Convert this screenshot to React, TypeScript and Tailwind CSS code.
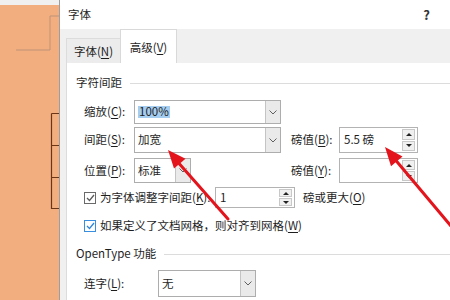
import React from 'react';

function Key({ children }: { children: React.ReactNode }) {
    return <span className="underline underline-offset-2 decoration-1">{children}</span>;
}

function Chevron() {
    return (
        <svg width="8" height="5" viewBox="0 0 8 5" className="text-[#606060]">
            <path d="M0.5 0.5 L4 4 L7.5 0.5" fill="none" stroke="currentColor" strokeWidth="1" />
        </svg>
    );
}

function Combo({ value, className, selected }: { value?: string; className: string; selected?: boolean }) {
    return (
        <div className={`flex h-full border border-[#adadad] bg-white ${className}`}>
            <div className="flex-1 flex items-center pl-[3px] overflow-hidden whitespace-nowrap">
                {selected ? <span className="bg-[#a5cdf0] px-[1px]">{value}</span> : value}
            </div>
            <div className="w-[15px] flex items-center justify-center bg-[#eaeaea] border-l border-[#c4c4c4]">
                <Chevron />
            </div>
        </div>
    );
}

function Spin({ value, className }: { value?: string; className: string }) {
    return (
        <div className={`flex h-full border border-[#b3b3b3] bg-white ${className}`}>
            <div className="flex-1 flex items-center pl-[4px]">{value}</div>
            <div className="w-[16px] flex flex-col gap-px p-px pr-[2px]">
                <div className="flex-1 flex items-center justify-center bg-[#f0f0f0] border border-[#c8c8c8]">
                    <svg width="6" height="3" viewBox="0 0 6 3"><path d="M0 3 L3 0 L6 3 Z" fill="#222" /></svg>
                </div>
                <div className="flex-1 flex items-center justify-center bg-[#f0f0f0] border border-[#c8c8c8]">
                    <svg width="6" height="3" viewBox="0 0 6 3"><path d="M0 0 L3 3 L6 0 Z" fill="#222" /></svg>
                </div>
            </div>
        </div>
    );
}

function Check({ blue }: { blue?: boolean }) {
    const c = blue ? '#2f86d8' : '#5a5a5a';
    return (
        <div className={`w-[12px] h-[12px] border bg-white flex items-center justify-center ${blue ? 'border-[#3a8ee0]' : 'border-[#6a6a6a]'}`}>
            <svg width="9" height="8" viewBox="0 0 9 8">
                <path d="M1 4 L3.5 6.5 L8 1" fill="none" stroke={c} strokeWidth="1.3" />
            </svg>
        </div>
    );
}

export default function App() {
    return (
        <div className="relative w-[450px] h-[300px] flex overflow-hidden text-[11.5px] text-[#1e1e1e] font-['Noto_Sans_CJK_SC','Microsoft_YaHei',sans-serif] leading-none">
            {/* document behind the dialog */}
            <div className="w-[59px] flex flex-col bg-[#f3ae80]">
                <div className="h-[5px] bg-[#f0f0f0]" />
                <svg width="59" height="295" viewBox="0 5 59 295">
                    <path d="M16 50 H50 V16 H59" fill="none" stroke="#bd9478" strokeWidth="1" />
                    <path d="M51.5 113.5 H59 M51.5 113.5 V208.5 H59 M51.5 145.5 H59 M51.5 177.5 H59" fill="none" stroke="#6b3516" strokeWidth="1.2" />
                </svg>
            </div>
            <div className="w-px bg-[#9d9d9d]" />

            {/* dialog */}
            <div className="flex-1 flex flex-col bg-[#f0f0f0]">
                <div className="h-[29px] bg-white flex items-center justify-between pl-[8px] pr-[20px]">
                    <span>字体</span>
                    <span className="font-bold text-[13px] text-[#333]">?</span>
                </div>

                <div className="h-[34px] flex items-end pl-[6px]">
                    <div className="w-[55px] h-[25px] flex items-center justify-center pt-[2px] bg-[#ececec] border border-b-0 border-[#dcdcdc]">
                        字体(<Key>N</Key>)
                    </div>
                    <div className="w-[57px] h-[34px] flex items-center justify-center pt-[2px] bg-white border border-b-0 border-[#d9d9d9] -ml-px">
                        高级(<Key>V</Key>)
                    </div>
                </div>

                <div className="flex-1 ml-[6px] bg-white border-l border-[#dcdcdc] flex flex-col">
                    <div className="h-[16px] mt-[12px] flex items-center pl-[9px]">
                        <span>字符间距</span>
                        <div className="flex-1 h-px bg-[#dcdcdc] ml-[8px]" />
                    </div>

                    <div className="h-[24px] mt-[9px] flex items-center pl-[17px]">
                        <span className="w-[50px]">缩放(<Key>C</Key>):</span>
                        <Combo className="w-[147px]" value="100%" selected />
                    </div>

                    <div className="h-[26px] mt-[3px] flex items-center pl-[17px]">
                        <span className="w-[50px]">间距(<Key>S</Key>):</span>
                        <Combo className="w-[147px]" value="加宽" />
                        <span className="w-[48px] ml-[10px]">磅值(<Key>B</Key>):</span>
                        <Spin className="w-[79px]" value="5.5 磅" />
                    </div>

                    <div className="h-[25px] mt-[5px] flex items-center pl-[17px]">
                        <span className="w-[50px]">位置(<Key>P</Key>):</span>
                        <Combo className="w-[57px]" value="标准" />
                        <span className="w-[48px] ml-[100px]">磅值(<Key>Y</Key>):</span>
                        <Spin className="w-[79px]" />
                    </div>

                    <div className="h-[21px] mt-[4px] flex items-center pl-[17px]">
                        <Check />
                        <span className="w-[119px] pl-[4px] whitespace-nowrap">为字体调整字间距(<Key>K</Key>):</span>
                        <Spin className="w-[80px]" value="1" />
                        <span className="ml-[8px]">磅或更大(<Key>O</Key>)</span>
                    </div>

                    <div className="h-[16px] mt-[10px] flex items-center pl-[17px]">
                        <Check blue />
                        <span className="pl-[4px] whitespace-nowrap">如果定义了文档网格，则对齐到网格(<Key>W</Key>)</span>
                    </div>

                    <div className="h-[16px] mt-[12px] flex items-center pl-[9px]">
                        <span>OpenType 功能</span>
                        <div className="flex-1 h-px bg-[#dcdcdc] ml-[8px]" />
                    </div>

                    <div className="h-[27px] mt-[8px] flex items-center pl-[17px]">
                        <span className="w-[74px]">连字(<Key>L</Key>):</span>
                        <Combo className="w-[98px]" value="无" />
                    </div>
                </div>
            </div>

            {/* red annotation arrows */}
            <svg className="absolute inset-0 pointer-events-none" width="450" height="300" viewBox="0 0 450 300">
                <line x1="228" y1="219" x2="176" y2="160" stroke="#e3141c" strokeWidth="3" strokeLinecap="round" />
                <path d="M168 150 L185.5 158.8 L174 168.5 Z" fill="#e3141c" />
                <line x1="456" y1="232" x2="393" y2="157" stroke="#e3141c" strokeWidth="3" strokeLinecap="round" />
                <path d="M385 147 L402.5 156.6 L391 166.3 Z" fill="#e3141c" />
            </svg>
        </div>
    );
}
